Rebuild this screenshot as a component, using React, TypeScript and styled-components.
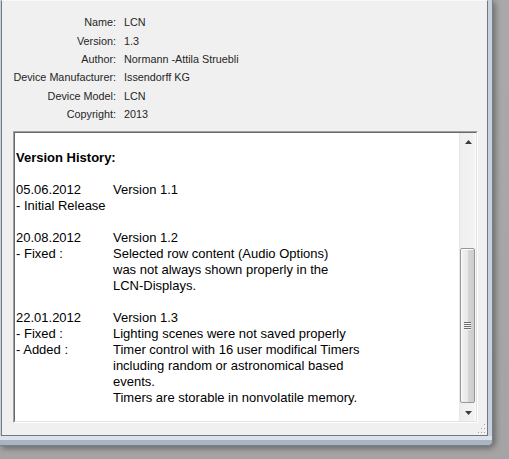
import React from 'react'
import styled, { createGlobalStyle } from 'styled-components'

const GlobalStyle = createGlobalStyle`
	html, body {
		margin: 0;
		padding: 0;
		background: #a7a7a7;
	}
	* {
		box-sizing: border-box;
	}
`

const info = [
	['Name:', 'LCN'],
	['Version:', '1.3'],
	['Author:', 'Normann -Attila Struebli'],
	['Device Manufacturer:', 'Issendorff KG'],
	['Device Model:', 'LCN'],
	['Copyright:', '2013'],
]

const history = [
	{
		date: '05.06.2012',
		version: 'Version 1.1',
		notes: [{ label: '- Initial Release', lines: [] as string[] }],
	},
	{
		date: '20.08.2012',
		version: 'Version 1.2',
		notes: [
			{
				label: '- Fixed :',
				lines: [
					'Selected row content (Audio Options)',
					'was not always shown properly in the',
					'LCN-Displays.',
				],
			},
		],
	},
	{
		date: '22.01.2012',
		version: 'Version 1.3',
		notes: [
			{ label: '- Fixed :', lines: ['Lighting scenes were not saved properly'] },
			{
				label: '- Added :',
				lines: [
					'Timer control with 16 user modifical Timers',
					'including random or astronomical based',
					'events.',
					'Timers are storable in nonvolatile memory.',
				],
			},
		],
	},
]

function Arrow({ down }: { down?: boolean }) {
	return (
		<svg width="7" height="4" viewBox="0 0 7 4">
			{down ? (
				<path d="M0 0h7L3.5 4z" fill="#3c3c3c" />
			) : (
				<path d="M3.5 0L7 4H0z" fill="#3c3c3c" />
			)}
		</svg>
	)
}

export default function App() {
	return (
		<Screen>
			<GlobalStyle />
			<Window>
				<Client>
					<InfoGrid>
						{info.map(([label, value]) => (
							<React.Fragment key={label}>
								<InfoLabel>{label}</InfoLabel>
								<InfoValue>{value}</InfoValue>
							</React.Fragment>
						))}
					</InfoGrid>
					<Sunken>
						<SunkenInner>
							<TextArea>
								<Heading>Version History:</Heading>
								{history.map((entry) => (
									<Entry key={entry.date}>
										<Cell>{entry.date}</Cell>
										<Cell>{entry.version}</Cell>
										{entry.notes.map((note) => (
											<React.Fragment key={note.label}>
												<Cell>{note.label}</Cell>
												<Cell>
													{note.lines.map((line) => (
														<Line key={line}>{line}</Line>
													))}
												</Cell>
											</React.Fragment>
										))}
									</Entry>
								))}
							</TextArea>
							<ScrollBar>
								<ScrollButton>
									<Arrow />
								</ScrollButton>
								<Track>
									<Thumb>
										<svg width="7" height="8" viewBox="0 0 7 8">
											{[0, 2, 4, 6].map((y) => (
												<g key={y}>
													<rect x="0" y={y} width="7" height="1" fill="#6e6e6e" />
													<rect x="0" y={y + 1} width="7" height="1" fill="#f4f4f4" />
												</g>
											))}
										</svg>
									</Thumb>
								</Track>
								<ScrollButton>
									<Arrow down />
								</ScrollButton>
							</ScrollBar>
						</SunkenInner>
					</Sunken>
					<SizeGrip>
						<svg width="10" height="10" viewBox="0 0 10 10">
							{[
								[8, 0],
								[5, 4],
								[8, 4],
								[2, 8],
								[5, 8],
								[8, 8],
							].map(([x, y]) => (
								<g key={`${x}-${y}`}>
									<rect x={x + 1} y={y + 1} width="1" height="1" fill="#ffffff" />
									<rect x={x} y={y} width="1" height="1" fill="#a3a3a3" />
								</g>
							))}
						</svg>
					</SizeGrip>
				</Client>
			</Window>
		</Screen>
	)
}

const Screen = styled.div`
	width: 509px;
	height: 459px;
	overflow: hidden;
	background: linear-gradient(to bottom, #a9a9a9, #a4a4a4);
`

const Window = styled.div`
	display: flex;
	width: 493px;
	height: 446px;
	padding: 0 4px 9px 1px;
	background: linear-gradient(
		to bottom,
		#c8d2dd 0,
		#c8d2dd 436px,
		#dbe2e9 436px,
		#dbe2e9 440px,
		#a9b5c2 440px,
		#a9b5c2 100%
	);
	border-right: 1px solid #76808b;
	border-bottom: 1px solid #76808b;
	border-bottom-right-radius: 5px;
	box-shadow: 2px 2px 6px rgba(0, 0, 0, 0.4);
`

const Client = styled.div`
	position: relative;
	flex: 1;
	display: flex;
	flex-direction: column;
	background: #f0f0f0;
	border: 1px solid #6f7984;
	border-top: 1px solid #f8f8f8;
`

const InfoGrid = styled.div`
	display: grid;
	grid-template-columns: 114px 1fr;
	grid-auto-rows: 18.4px;
	column-gap: 8px;
	padding-top: 12px;
	font-family: 'Liberation Sans', Arial, sans-serif;
	font-size: 10.8px;
	color: #262626;
	align-items: center;
`

const InfoLabel = styled.div`
	text-align: right;
	white-space: nowrap;
`

const InfoValue = styled.div`
	white-space: nowrap;
`

const Sunken = styled.div`
	margin: auto 9px 12px 11px;
	height: 292px;
	border: 1px solid;
	border-color: #a0a0a0 #ffffff #ffffff #a0a0a0;
`

const SunkenInner = styled.div`
	display: flex;
	height: 100%;
	background: #ffffff;
	border: 1px solid;
	border-color: #696969 #e3e3e3 #e3e3e3 #696969;
`

const TextArea = styled.div`
	flex: 1;
	padding: 17px 0 0 1px;
	font-family: 'Liberation Sans', Arial, sans-serif;
	font-size: 13px;
	line-height: 16px;
	color: #000000;
	overflow: hidden;
`

const Heading = styled.div`
	font-weight: bold;
	margin-bottom: 16px;
`

const Entry = styled.div`
	display: grid;
	grid-template-columns: 97px 1fr;
	margin-bottom: 16px;
	white-space: nowrap;
`

const Cell = styled.div``

const Line = styled.div``

const ScrollBar = styled.div`
	width: 17px;
	display: flex;
	flex-direction: column;
	background: linear-gradient(to right, #e6e6e6 0, #efefef 2px, #f2f2f2 14px, #fafafa 100%);
`

const ScrollButton = styled.div`
	height: 17px;
	display: flex;
	align-items: center;
	justify-content: center;
	padding-left: 1px;
`

const Track = styled.div`
	flex: 1;
	display: flex;
	flex-direction: column;
	justify-content: flex-end;
	padding: 0 1px 1px 1px;
`

const Thumb = styled.div`
	height: 155px;
	display: flex;
	align-items: center;
	justify-content: center;
	border: 1px solid #979797;
	border-radius: 2px;
	background: linear-gradient(to right, #f3f3f3 0, #e8e8e8 50%, #d6d6d6 51%, #cdcdcd 100%);
	box-shadow: inset 1px 1px 0 #fbfbfb;
`

const SizeGrip = styled.div`
	position: absolute;
	right: 1px;
	bottom: 1px;
	width: 10px;
	height: 10px;
	line-height: 0;
`
